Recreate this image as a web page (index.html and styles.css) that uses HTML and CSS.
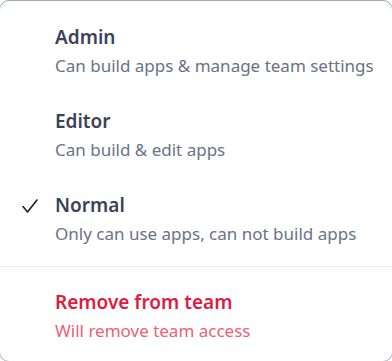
FILE: index.html
```html
<!DOCTYPE html>
<html lang="en">
<head>
  <meta charset="UTF-8">
  <title>Team role</title>
  <link rel="stylesheet" href="styles.css">
</head>
<body>
  <div class="menu">
    <div class="section">
      <div class="item">
        <div class="title">Admin</div>
        <div class="desc">Can build apps &amp; manage team settings</div>
      </div>
      <div class="item">
        <div class="title">Editor</div>
        <div class="desc">Can build &amp; edit apps</div>
      </div>
      <div class="item selected">
        <svg class="check" width="16" height="16" viewBox="0 0 16 16">
          <path d="M1 8.5 L5.5 14 L15 2" fill="none" stroke="#1a1f36" stroke-width="1.6" stroke-linecap="round" stroke-linejoin="round"/>
        </svg>
        <div class="title">Normal</div>
        <div class="desc">Only can use apps, can not build apps</div>
      </div>
    </div>
    <div class="section danger">
      <div class="item">
        <div class="title">Remove from team</div>
        <div class="desc">Will remove team access</div>
      </div>
    </div>
  </div>
</body>
</html>
```

FILE: styles.css
```css
body {
  margin: 0;
  background-color: #ffffff;
  font-family: "Noto Sans", "Open Sans", sans-serif;
  overflow: hidden;
}

.menu {
  margin: 0 -1px;
  height: 362px;
  box-sizing: border-box;
  border: 1px solid #a3acb9;
  border-radius: 10px;
  background-color: #ffffff;
}

.section {
  padding: 9px 0 4px;
}

.danger {
  border-top: 1px solid #ebeef1;
  padding: 8px 0 6px;
}

.item {
  position: relative;
  padding: 15px 12px 15px 55px;
}

.check {
  position: absolute;
  left: 22px;
  top: 20px;
}

.title {
  font-size: 19px;
  line-height: 24px;
  font-weight: 600;
  color: #3c4257;
}

.desc {
  margin-top: 3px;
  font-size: 17px;
  line-height: 27px;
  color: #697386;
}

.danger .title {
  color: #df1b41;
}

.danger .desc {
  color: #ed5f74;
}
```
